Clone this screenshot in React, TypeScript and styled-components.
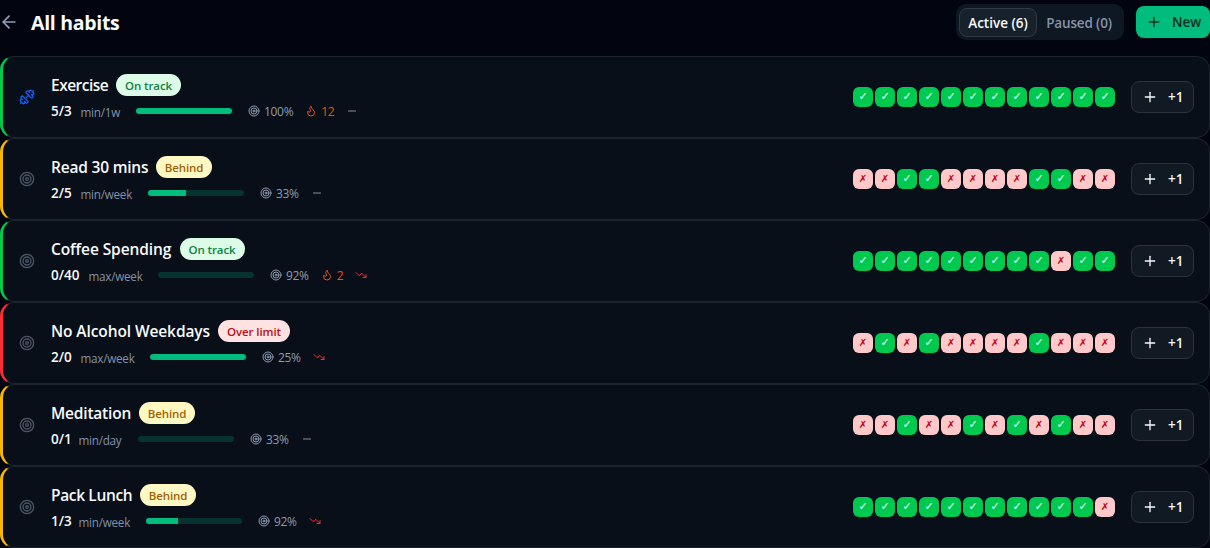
import React from 'react'
import styled, { createGlobalStyle } from 'styled-components';
import { ArrowLeft, Dumbbell, Flame, Minus, Plus, Target, TrendingDown } from 'lucide-react';

const GlobalStyle = createGlobalStyle`
    * {
        box-sizing: border-box;
    }
    body {
        margin: 0;
        background-color: #020510;
        color: #f8fafc;
        font-family: "Open Sans", "Noto Sans", sans-serif;
        overflow: hidden;
    }
    button {
        font-family: inherit;
    }
    svg {
        flex-shrink: 0;
    }
`;

type Status = 'track' | 'behind' | 'over';

const badgeText = { track: 'On track', behind: 'Behind', over: 'Over limit' };
const badgeWidth = { track: 65, behind: 56, over: 72 };
const badgeBg = { track: '#dcfce7', behind: '#fef9c2', over: '#ffe2e2' };
const badgeColor = { track: '#118243', behind: '#a66005', over: '#c10d14' };
const edgeColor = { track: '#00c950', behind: '#f5b70a', over: '#fb2c36' };

const Page = styled.main`
    width: 100%;
    height: 548px;
    overflow: hidden;
`;

const Header = styled.header`
    display: flex;
    align-items: center;
    height: 44px;
    margin-bottom: 12px;
`;

const BackButton = styled.button`
    display: flex;
    padding: 0;
    margin-left: -1px;
    border: none;
    background: none;
    color: #94a0b8;
`;

const Title = styled.h1`
    flex: 1;
    margin: 0 0 0 12px;
    padding-top: 1px;
    font-size: 19.5px;
    font-weight: 700;
    line-height: 28px;
    letter-spacing: -0.3px;
`;

const Tabs = styled.div`
    display: flex;
    height: 36px;
    width: 168px;
    padding: 4px 3px 3px;
    margin-right: 12px;
    border-radius: 10px;
    background-color: #0d1822;
`;

const Tab = styled.button<{ $active?: boolean }>`
    width: ${p => p.$active ? 78 : 84}px;
    padding: 0;
    border: 1px solid ${p => p.$active ? '#303a45' : 'transparent'};
    border-radius: 8px;
    background-color: ${p => p.$active ? '#17212c' : 'transparent'};
    color: ${p => p.$active ? '#f8fafc' : '#8592a9'};
    font-size: 13.5px;
    font-weight: 600;
    letter-spacing: ${p => p.$active ? 0 : -0.15}px;
    white-space: nowrap;
`;

const NewButton = styled.button`
    display: flex;
    align-items: center;
    gap: 10px;
    width: 74px;
    height: 32px;
    padding: 0 0 0 10px;
    border: none;
    border-radius: 8px;
    background-color: #00bc7d;
    color: #052e22;
    font-size: 13.5px;
    font-weight: 600;
`;

const Card = styled.article<{ $status: Status }>`
    display: flex;
    align-items: center;
    gap: 16px;
    height: 82px;
    padding: 0 16px;
    border: 1px solid #1c242e;
    border-left: 3px solid ${p => edgeColor[p.$status]};
    border-radius: 14px;
    background-color: #080f19;
`;

const Info = styled.div`
    display: flex;
    flex: 1;
    flex-direction: column;
    gap: 4px;
`;

const NameRow = styled.div`
    display: flex;
    align-items: center;
    gap: 8px;
    height: 24px;
`;

const Name = styled.span<{ $width: number; $tracking: number }>`
    width: ${p => p.$width}px;
    font-size: 15.5px;
    font-weight: 600;
    letter-spacing: ${p => p.$tracking}px;
    white-space: nowrap;
`;

const Badge = styled.span<{ $status: Status }>`
    width: ${p => badgeWidth[p.$status]}px;
    height: 22px;
    border-radius: 11px;
    background-color: ${p => badgeBg[p.$status]};
    color: ${p => badgeColor[p.$status]};
    font-size: 11.5px;
    font-weight: 600;
    line-height: 23px;
    letter-spacing: -0.1px;
    text-align: center;
    white-space: nowrap;
`;

const StatRow = styled.div`
    display: flex;
    align-items: center;
    height: 20px;
    color: #8290a7;
    font-size: 12px;
    white-space: nowrap;
`;

const Count = styled.span<{ $width: number }>`
    width: ${p => p.$width}px;
    margin-right: 8px;
    color: #f8fafc;
    font-size: 13.5px;
    font-weight: 600;
`;

const Unit = styled.span<{ $width: number }>`
    width: ${p => p.$width}px;
    margin-right: 16px;
    padding-top: 1px;
    font-size: 11.7px;
    letter-spacing: -0.25px;
`;

const Track = styled.div`
    width: 96px;
    height: 6px;
    margin-right: 16px;
    border-radius: 3px;
    overflow: hidden;
    background-color: #06332f;
`;

const Fill = styled.div`
    height: 100%;
    background-color: #00bc7d;
`;

const Stat = styled.span<{ $color?: string }>`
    display: flex;
    align-items: center;
    gap: 4px;
    margin-right: 12px;
    color: ${p => p.$color || '#8e9bb0'};
    letter-spacing: -0.3px;
`;

const History = styled.div`
    display: flex;
    gap: 2px;
`;

const Day = styled.span<{ $done: boolean }>`
    width: 20px;
    height: 20px;
    border-radius: 6px;
    background-color: ${p => p.$done ? '#00c950' : '#ffc9c9'};
    color: ${p => p.$done ? '#ffffff' : '#c10007'};
    font-family: "DejaVu Sans", sans-serif;
    font-size: ${p => p.$done ? 11 : 10}px;
    line-height: 20px;
    text-align: center;
`;

const AddButton = styled.button`
    display: flex;
    align-items: center;
    gap: 10px;
    width: 63px;
    height: 32px;
    padding: 0 0 0 10px;
    margin-right: -1px;
    border: 1px solid #2a323c;
    border-radius: 8px;
    background-color: #111923;
    color: #f8fafc;
    font-size: 13.5px;
    font-weight: 600;
`;

interface Habit {
    name: string;
    nameWidth: number;
    tracking: number;
    status: Status;
    count: string;
    countWidth: number;
    unit: string;
    unitWidth: number;
    progress: number;
    rate: string;
    streak?: number;
    down?: boolean;
    days: string;
}

const habits: Habit[] = [
    { name: 'Exercise', nameWidth: 57, tracking: -0.5, status: 'track', count: '5/3', countWidth: 21.5, unit: 'min/1w', unitWidth: 39.5, progress: 100, rate: '100%', streak: 12, days: '111111111111' },
    { name: 'Read 30 mins', nameWidth: 97, tracking: -0.2, status: 'behind', count: '2/5', countWidth: 21.5, unit: 'min/week', unitWidth: 51.5, progress: 40, rate: '33%', days: '001100001100' },
    { name: 'Coffee Spending', nameWidth: 120.5, tracking: -0.1, status: 'track', count: '0/40', countWidth: 29.5, unit: 'max/week', unitWidth: 53.5, progress: 0, rate: '92%', streak: 2, down: true, days: '111111111011' },
    { name: 'No Alcohol Weekdays', nameWidth: 159, tracking: -0.1, status: 'over', count: '2/0', countWidth: 21.5, unit: 'max/week', unitWidth: 53.5, progress: 100, rate: '25%', down: true, days: '010100001000' },
    { name: 'Meditation', nameWidth: 80, tracking: -0.2, status: 'behind', count: '0/1', countWidth: 19.5, unit: 'min/day', unitWidth: 43.5, progress: 0, rate: '33%', days: '001001010100' },
    { name: 'Pack Lunch', nameWidth: 81, tracking: -0.35, status: 'behind', count: '1/3', countWidth: 19.5, unit: 'min/week', unitWidth: 51.5, progress: 33.3, rate: '92%', down: true, days: '111111111110' },
];

const HabitCard: React.FC<{ habit: Habit }> = ({ habit }) => {
    return (
        <Card $status={habit.status}>
            {habit.name === 'Exercise'
                ? <Dumbbell size={16} color="#155dfc" />
                : <Target size={16} color="#4b5766" />}
            <Info>
                <NameRow>
                    <Name $width={habit.nameWidth} $tracking={habit.tracking}>{habit.name}</Name>
                    <Badge $status={habit.status}>{badgeText[habit.status]}</Badge>
                </NameRow>
                <StatRow>
                    <Count $width={habit.countWidth}>{habit.count}</Count>
                    <Unit $width={habit.unitWidth}>{habit.unit}</Unit>
                    <Track>
                        <Fill style={{ width: `${habit.progress}%` }} />
                    </Track>
                    <Stat><Target size={12} />{habit.rate}</Stat>
                    {habit.streak && <Stat $color="#e8500f"><Flame size={12} />{habit.streak}</Stat>}
                    {habit.down ? <TrendingDown size={12} color="#e8303a" /> : <Minus size={12} />}
                </StatRow>
            </Info>
            <History>
                {habit.days.split('').map((day, i) => (
                    <Day key={i} $done={day === '1'}>{day === '1' ? '✓' : '✗'}</Day>
                ))}
            </History>
            <AddButton><Plus size={16} />+1</AddButton>
        </Card>
    );
}

const App: React.FC = () => {
    return (
        <Page>
            <GlobalStyle />
            <Header>
                <BackButton><ArrowLeft size={20} /></BackButton>
                <Title>All habits</Title>
                <Tabs>
                    <Tab $active>Active (6)</Tab>
                    <Tab>Paused (0)</Tab>
                </Tabs>
                <NewButton><Plus size={16} />New</NewButton>
            </Header>
            {habits.map(habit => <HabitCard key={habit.name} habit={habit} />)}
        </Page>
    );
}
export default App;
